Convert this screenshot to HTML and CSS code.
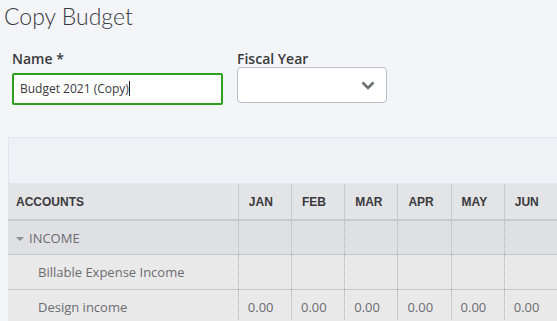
FILE: index.html
```html
<!DOCTYPE html>
<html lang="en">
<head>
    <meta charset="UTF-8">
    <title>Copy Budget</title>
    <link rel="stylesheet" href="styles.css">
</head>
<body>

<!-- Cabecera -->
<h1 class="title">Copy Budget</h1>

<div class="fields">
    <div class="field">
        <label for="budgetName">Name *</label>
        <div class="name-input" id="budgetName">Budget 2021 (Copy)<span class="cursor"></span></div>
    </div>
    <div class="field">
        <label for="fiscalYear">Fiscal Year</label>
        <div class="select" id="fiscalYear">
            <svg width="14" height="9" viewBox="0 0 14 9">
                <path d="M1.5 1.5 L7 7 L12.5 1.5" fill="none" stroke="#6b6c72" stroke-width="2.6"/>
            </svg>
        </div>
    </div>
</div>

<!-- Tabla del presupuesto -->
<div class="panel">
    <div class="toolbar"></div>
    <table class="budget">
        <thead>
            <tr>
                <th class="acc">ACCOUNTS</th>
                <th>JAN</th>
                <th>FEB</th>
                <th>MAR</th>
                <th>APR</th>
                <th>MAY</th>
                <th>JUN</th>
            </tr>
        </thead>
        <tbody>
            <tr class="group">
                <td class="acc"><span class="caret"></span>INCOME</td>
                <td></td><td></td><td></td><td></td><td></td><td></td>
            </tr>
            <tr>
                <td class="acc sub">Billable Expense Income</td>
                <td></td><td></td><td></td><td></td><td></td><td></td>
            </tr>
            <tr>
                <td class="acc sub">Design income</td>
                <td>0.00</td><td>0.00</td><td>0.00</td><td>0.00</td><td>0.00</td><td>0.00</td>
            </tr>
        </tbody>
    </table>
</div>

</body>
</html>
```

FILE: styles.css
```css
body {
    margin: 0;
    background: #f4f5f8;
    font-family: 'Lato', sans-serif;
    color: #393a3d;
    overflow: hidden;
}

.title {
    margin: 0;
    padding: 3px 0 0 4px;
    font-size: 23px;
    font-weight: 300;
    line-height: 26px;
    color: #393a3d;
}

.fields {
    display: flex;
    gap: 14px;
    padding: 21px 0 0 12px;
    align-items: flex-start;
}

.field label {
    display: block;
    font-family: 'Open Sans', sans-serif;
    font-size: 14px;
    font-weight: 600;
    line-height: 17px;
    color: #393a3d;
}

.name-input {
    margin-top: 6px;
    border: 2px solid #2ca01c;
    border-radius: 2px;
    background: #fff;
    font-family: 'Open Sans', sans-serif;
    font-size: 12px;
    line-height: 28px;
    height: 28px;
    width: 201px;
    padding-left: 6px;
    color: #393a3d;
}

.cursor {
    display: inline-block;
    width: 1px;
    height: 15px;
    background: #222;
    vertical-align: -3px;
}

.select {
    width: 150px;
    height: 36px;
    border: 1px solid #babec5;
    border-radius: 4px;
    background: #fff;
    display: flex;
    align-items: center;
    justify-content: flex-end;
    padding-right: 11px;
    box-sizing: border-box;
}

.panel {
    margin: 32px 0 0 8px;
}

.toolbar {
    height: 45px;
    background: #eff1f5;
    border: 1px solid #dde6f2;
    border-right: none;
}

.budget {
    width: 100%;
    border-collapse: collapse;
    table-layout: fixed;
    font-family: 'Open Sans', sans-serif;
    font-size: 13px;
}

.budget th {
    background: #e3e4e6;
    height: 35px;
    text-align: left;
    padding: 0 0 0 10px;
    font-family: 'Liberation Sans', sans-serif;
    font-size: 12px;
    font-weight: 700;
    color: #393a3d;
    border-left: 1px solid #c9cacc;
    border-bottom: 2px solid #c8c9cb;
    width: 42px;
}

.budget th.acc {
    width: 221px;
    padding-left: 8px;
    border-left: none;
}

.budget td {
    height: 34px;
    padding: 0 0 0 9px;
    border-left: 1px dotted #aeb0b3;
    border-bottom: 1px solid #c3c4c6;
    background: #e9e9e9;
    color: #6b6c71;
}

.budget td.acc {
    border-left: none;
    padding-left: 8px;
}

.budget td.sub {
    padding-left: 30px;
}

.group td {
    background: #dfe0e3;
    height: 33px;
}

.group td.acc {
    color: #6b6c71;
}

.caret {
    display: inline-block;
    width: 0;
    height: 0;
    border-left: 4px solid transparent;
    border-right: 4px solid transparent;
    border-top: 4px solid #8d9096;
    margin: 0 5px 0 0;
    vertical-align: 2px;
}
```
